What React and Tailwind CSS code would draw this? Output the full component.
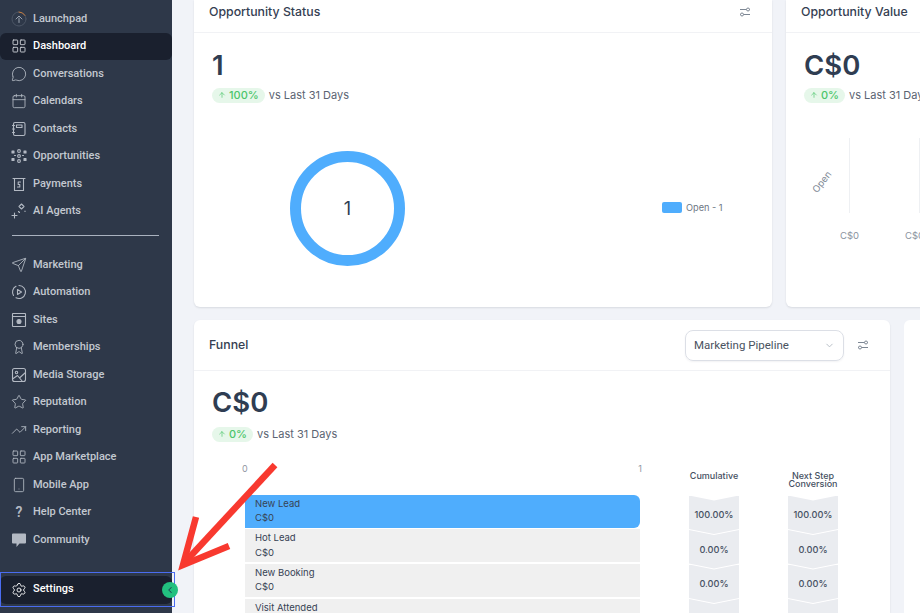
import { Award, Calendar, ChevronDown, ChevronLeft, ArrowUp, LayoutGrid, MessageCircle, Send, Settings, Smartphone, Star, TrendingUp } from 'lucide-react';

function Svg({ children }) {
  return (
    <svg width="16" height="16" viewBox="0 0 16 16" fill="none" stroke="currentColor" strokeWidth="1.1" strokeLinecap="round" strokeLinejoin="round">
      {children}
    </svg>
  );
}

function LaunchpadIcon() {
  return (
    <svg width="16" height="16" viewBox="0 0 16 16" fill="none" strokeWidth="1" strokeLinecap="round" strokeLinejoin="round">
      <circle cx="8" cy="8" r="7" stroke="#4b5565" />
      <path d="M8 1a7 7 0 0 1 6 3.4" stroke="#c47a3d" />
      <path d="M8 11.5V7M5 8l3-3 3 3" stroke="#9aa3b0" />
    </svg>
  );
}

const ContactsIcon = () => (
  <Svg>
    <rect x="2.5" y="1.5" width="11.5" height="13" rx="1.5" />
    <rect x="5.5" y="4" width="5.5" height="2.5" />
    <path d="M1.5 4.5h2M1.5 8h2M1.5 11.5h2" />
  </Svg>
);

const OpportunitiesIcon = () => (
  <Svg>
    <circle cx="8" cy="3" r="1.4" />
    <circle cx="8" cy="8" r="1.4" />
    <circle cx="8" cy="13" r="1.4" />
    <rect x="1" y="3" width="2" height="2" fill="currentColor" />
    <rect x="1" y="10.5" width="2" height="2" fill="currentColor" />
    <rect x="13" y="3" width="2" height="2" fill="currentColor" />
    <rect x="13" y="10.5" width="2" height="2" fill="currentColor" />
    <path d="M3.5 7.5h1M11.5 7.5h1" />
  </Svg>
);

const PaymentsIcon = () => (
  <Svg>
    <path d="M2 2.5h12M3.5 2.5v12h9v-12" />
    <path d="M9.5 6H7.2v2.5h1.6V11H6.5" />
  </Svg>
);

const AgentsIcon = () => (
  <Svg>
    <path d="M10.5 1l2.5 2.5-2.5 2.5L8 3.5z" />
    <path d="M1 12.5h5M3.5 10v5M7.5 8.5l1 1M14 8v.5" />
  </Svg>
);

const AutomationIcon = () => (
  <Svg>
    <path d="M8 1.5a6.5 6.5 0 1 1-3 12.3M2.5 11.5A6.5 6.5 0 0 1 5 2.3" />
    <path d="M6.5 5.5v5l4-2.5z" />
  </Svg>
);

const SitesIcon = () => (
  <Svg>
    <rect x="1.5" y="1.5" width="13" height="13" rx="0.5" />
    <path d="M1.5 4.5h13" />
    <circle cx="8" cy="9.5" r="2" fill="currentColor" />
  </Svg>
);

const MediaIcon = () => (
  <Svg>
    <rect x="1.5" y="1.5" width="13" height="13" rx="2" />
    <circle cx="5.5" cy="5.5" r="1.2" />
    <path d="M1.5 12l5-3.5 5 6M9 10.5l5.5-5" />
  </Svg>
);

const CommunityIcon = () => (
  <svg width="16" height="16" viewBox="0 0 16 16" fill="currentColor">
    <path d="M2 1.5h12a1 1 0 0 1 1 1v8a1 1 0 0 1-1 1H8.5L5.5 15v-3.5H2a1 1 0 0 1-1-1v-8a1 1 0 0 1 1-1z" />
  </svg>
);

const lucide = (Icon) => () => <Icon size={16} strokeWidth={1.3} />;

const navTop = [
  ['Launchpad', LaunchpadIcon],
  ['Dashboard', lucide(LayoutGrid), true],
  ['Conversations', lucide(MessageCircle)],
  ['Calendars', lucide(Calendar)],
  ['Contacts', ContactsIcon],
  ['Opportunities', OpportunitiesIcon],
  ['Payments', PaymentsIcon],
  ['AI Agents', AgentsIcon],
];

const navBottom = [
  ['Marketing', lucide(Send)],
  ['Automation', AutomationIcon],
  ['Sites', SitesIcon],
  ['Memberships', lucide(Award)],
  ['Media Storage', MediaIcon],
  ['Reputation', lucide(Star)],
  ['Reporting', lucide(TrendingUp)],
  ['App Marketplace', lucide(LayoutGrid)],
  ['Mobile App', lucide(Smartphone)],
  ['Help Center', () => <span className="w-4 text-center text-sm font-semibold">?</span>],
  ['Community', CommunityIcon],
];

function NavItem({ label, icon: Icon, active }) {
  return (
    <div className={`flex h-[27.5px] items-center gap-[6px] rounded-md pl-[11px] text-[11px] font-medium ${active ? 'bg-[#1a202e] text-white' : 'text-[#c3c8d0]'}`}>
      <span className={`flex w-4 justify-center ${active ? 'text-[#d5d9df]' : 'text-[#b3b9c3]'}`}>
        <Icon />
      </span>
      {label}
    </div>
  );
}

function Sidebar() {
  return (
    <aside className='flex h-[613px] w-[172px] shrink-0 flex-col bg-[#2e3849] pt-[5px] font-["Roboto",sans-serif]'>
      {navTop.map(([label, icon, active]) => (
        <NavItem key={label} label={label} icon={icon} active={active} />
      ))}
      <div className="mx-3 mt-[10px] mb-[15px] h-px w-[147px] bg-[#aab2bf]" />
      {navBottom.map(([label, icon]) => (
        <NavItem key={label} label={label} icon={icon} />
      ))}
      <div className="mt-[22px] flex h-[28px] w-[172px] items-center gap-[6px] rounded-md bg-[#1a202e] pl-[11px] text-[11px] font-medium text-white">
        <Settings size={16} strokeWidth={1.3} />
        Settings
      </div>
    </aside>
  );
}

function FilterIcon() {
  return (
    <svg width="12" height="12" viewBox="0 0 12 12" fill="none" stroke="#7d8794" strokeWidth="1">
      <path d="M1 3.5h6.5M10.5 3.5h.5M1 8.5h.5M4.500 8.5H11" />
      <circle cx="9" cy="3.5" r="1.5" />
      <circle cx="3" cy="8.5" r="1.5" />
    </svg>
  );
}

function Badge({ value }) {
  return (
    <div className="flex items-center gap-[4px]">
      <span className="flex h-[15px] items-center gap-[3px] rounded-full bg-[#e6f7ea] px-[6px] text-[11px] font-medium text-[#4cc56b]">
        <ArrowUp size={8} strokeWidth={2} />
        {value}
      </span>
      <span className="text-[11px] whitespace-nowrap text-[#5b6472]">vs Last 31 Days</span>
    </div>
  );
}

function CardHead({ title, children, className }) {
  return (
    <div className={`flex shrink-0 items-center justify-between border-b border-[#f1f2f5] pr-[21px] pl-[15px] ${className}`}>
      <h2 className="text-[12.3px] font-medium whitespace-nowrap text-[#354052]">{title}</h2>
      {children}
    </div>
  );
}

function Stat({ value, badge, topGap, badgeGap }) {
  return (
    <div className={`pl-[18px] ${topGap}`}>
      <div className="text-[27.5px] leading-[34px] font-semibold text-[#2f3d52]">{value}</div>
      <div className={badgeGap}>
        <Badge value={badge} />
      </div>
    </div>
  );
}

function StatusCard() {
  return (
    <section className="flex h-[307px] w-[578px] shrink-0 flex-col rounded-b-md bg-white shadow-[0_1px_2px_rgba(30,40,60,0.12)]">
      <CardHead title="Opportunity Status" className="h-[33px] pb-[8px]">
        <FilterIcon />
      </CardHead>
      <Stat value="1" badge="100%" topGap="pt-[15px]" badgeGap="mt-[5px]" />
      <div className="mt-[47px] flex items-center">
        <div className="ml-[96px] flex h-[115px] w-[115px] items-center justify-center rounded-full border-[11px] border-[#4fadfd] text-[18px] text-[#2f3d52]">
          1
        </div>
        <div className="ml-[257px] flex items-center gap-[4px] text-[9.2px] text-[#6d7683]">
          <span className="h-[11px] w-[20px] rounded-[2px] bg-[#4fadfd]" />
          Open - 1
        </div>
      </div>
    </section>
  );
}

function ValueCard() {
  return (
    <section className="flex h-[307px] w-[300px] shrink-0 flex-col rounded-b-md bg-white shadow-[0_1px_2px_rgba(30,40,60,0.12)]">
      <CardHead title="Opportunity Value" className="h-[33px] pb-[8px]" />
      <Stat value="C$0" badge="0%" topGap="pt-[15px]" badgeGap="mt-[5px]" />
      <div className="mt-[34px] flex h-[75px] pl-[63px]">
        <div className="h-full w-px bg-[#eef0f3]" />
        <div className="ml-[69px] h-full w-px bg-[#eef0f3]" />
      </div>
      <div className="relative mt-[16px] flex h-3 gap-[46px] pl-[54px] text-[9.5px] text-[#8b93a0]">
        <span>C$0</span>
        <span>C$0</span>
        <span className="absolute top-[-54px] left-[24px] -rotate-[52deg] text-[#7d8794]">Open</span>
      </div>
    </section>
  );
}

const stages = [
  ['New Lead', true],
  ['Hot Lead'],
  ['New Booking'],
  ['Visit Attended'],
];

function Chevron({ value }) {
  return (
    <div className="-mb-[4.5px] flex h-[39px] w-[50px] items-center justify-center bg-[#eaecf0] text-[9.2px] font-medium text-[#465062] [clip-path:polygon(0_0,50%_5px,100%_0,100%_33.5px,50%_38.5px,0_33.5px)]">
      {value}
    </div>
  );
}

function RateColumn({ title, values, className }) {
  return (
    <div className={`w-[50px] ${className}`}>
      <div className="flex h-[33px] justify-center pt-[9px] text-center text-[9px] leading-[8px] font-medium whitespace-nowrap text-[#465062]">
        <span>{title}</span>
      </div>
      {values.map((value, i) => (
        <Chevron key={i} value={value} />
      ))}
    </div>
  );
}

function FunnelCard() {
  return (
    <section className="flex h-[293px] w-[696px] shrink-0 flex-col overflow-hidden rounded-t-md bg-white shadow-[0_1px_2px_rgba(30,40,60,0.12)]">
      <CardHead title="Funnel" className="h-[51px]">
        <div className="flex items-center gap-[13px]">
          <div className='flex h-[31px] w-[159px] items-center justify-between rounded-lg border border-[#dcdfe6] pt-[1px] pr-[8px] pl-[8px] font-["Roboto",sans-serif] text-[11.5px] text-[#4a5260] shadow-[0_1px_2px_rgba(30,40,60,0.06)]'>
            Marketing Pipeline
            <ChevronDown size={11} className="text-[#b4bac3]" />
          </div>
          <FilterIcon />
        </div>
      </CardHead>
      <Stat value="C$0" badge="0%" topGap="pt-[14px]" badgeGap="mt-[7px]" />
      <div className="mt-[20px] flex">
        <div className="ml-[51px] w-[400px]">
          <div className="flex h-[11px] justify-between pr-[3px] text-[9px] leading-[11px] text-[#8f97a3]">
            <span className="-ml-[3px]">0</span>
            <span>1</span>
          </div>
          <div className="mt-[21px] flex flex-col gap-[1.7px]">
            {stages.map(([name, active]) => (
              <div
                key={name}
                className={`flex h-[33px] w-[395px] shrink-0 flex-col justify-center pl-[10px] text-[9.5px] leading-[14.5px] text-[#374254] ${active ? 'rounded-r-md bg-[#4fadfd]' : 'bg-[#f0f0f0]'}`}
              >
                <span>{name}</span>
                <span>C$0</span>
              </div>
            ))}
          </div>
        </div>
        <RateColumn
          className="ml-[44px]"
          title="Cumulative"
          values={['100.00%', '0.00%', '0.00%', '']}
        />
        <RateColumn
          className="ml-[49px]"
          title={<>Next Step<br />Conversion</>}
          values={['100.00%', '0.00%', '0.00%', '']}
        />
      </div>
    </section>
  );
}

function Arrow() {
  return (
    <svg className="absolute top-[455px] left-[170px]" width="120" height="125" viewBox="170 455 120 125" fill="none" stroke="#f8392f" strokeWidth="6.5">
      <path d="M275 465L186 561" />
      <path d="M196 517L183 565L229 546" />
    </svg>
  );
}

export default function App() {
  return (
    <div className='relative flex h-[613px] w-[920px] overflow-hidden bg-[#f1f3f8] font-["Inter",sans-serif]'>
      <Sidebar />
      <main className="flex min-w-0 flex-1 flex-col gap-[13px] pl-[22px]">
        <div className="flex gap-[14px]">
          <StatusCard />
          <ValueCard />
        </div>
        <div className="flex gap-[14px]">
          <FunnelCard />
          <section className="h-[293px] w-[300px] shrink-0 rounded-t-md bg-white" />
        </div>
      </main>
      <Arrow />
      <div className="absolute top-[572px] left-0 h-[35px] w-[175px] border border-[#4a6cf0]" />
      <div className="absolute top-[582px] left-[162px] flex h-4 w-4 items-center justify-center rounded-full bg-[#22c07f] text-[#1f4a55]">
        <ChevronLeft size={10} strokeWidth={2.5} />
      </div>
    </div>
  );
}
